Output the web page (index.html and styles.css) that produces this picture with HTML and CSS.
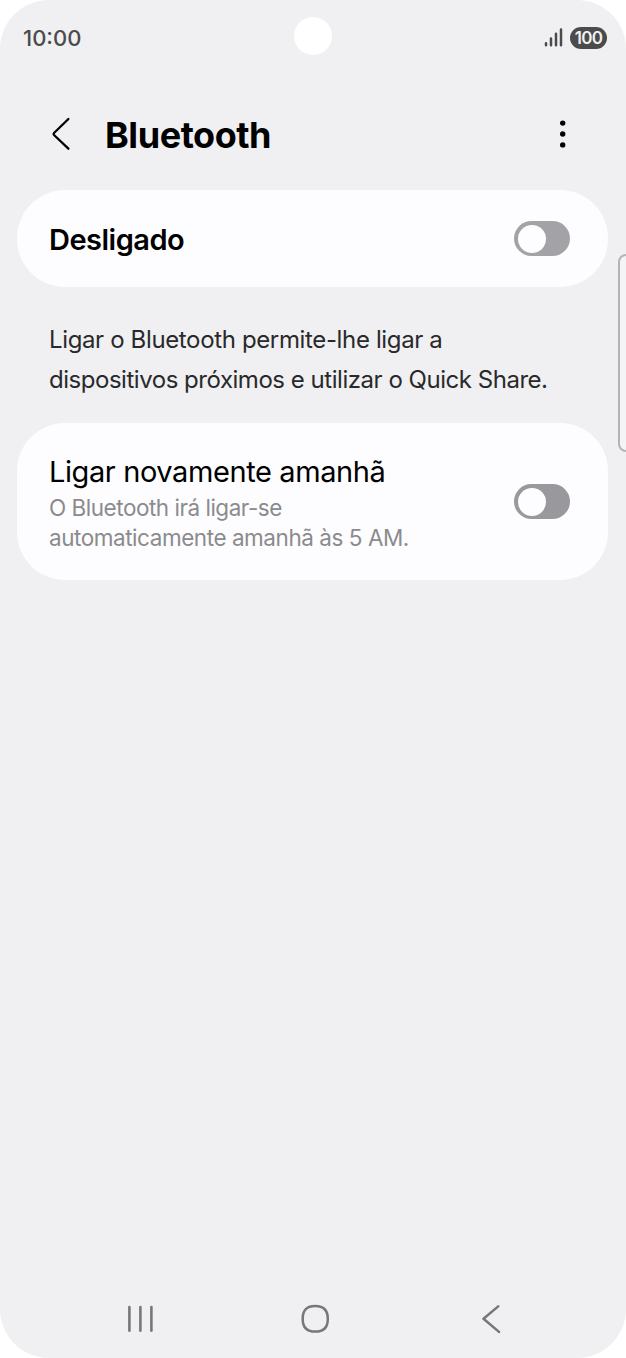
FILE: index.html
```html
<!DOCTYPE html>
<html lang="pt">
<head>
<meta charset="utf-8">
<title>Bluetooth</title>
<link rel="stylesheet" href="styles.css">
</head>
<body>
<div class="phone">
  <header class="status">
    <span class="clock">10:00</span>
    <span class="camera"></span>
    <div class="indicators">
      <svg class="signal" width="20" height="20" viewBox="0 0 20 20" fill="none" stroke="#4b4b4c" stroke-width="2.5" stroke-linecap="round"><path d="M2 15.2v2.1M7 10.5v6.8M12 5.8v11.5M17 1.5v15.8"/></svg>
      <span class="battery">100</span>
    </div>
  </header>
  <div class="appbar">
    <svg class="back" width="22" height="36" viewBox="0 0 22 36" fill="none" stroke="#000" stroke-width="2.3" stroke-linecap="round" stroke-linejoin="round"><path d="M18.4 3 4 17Q3 18 4 19L18.4 32.7"/></svg>
    <h1 class="title">Bluetooth</h1>
    <svg class="more" width="6" height="28" viewBox="0 0 6 28"><circle cx="2.7" cy="3.1" r="2.7"/><circle cx="2.7" cy="14" r="2.7"/><circle cx="2.7" cy="24.9" r="2.7"/></svg>
  </div>
  <main class="content">
    <section class="card card-main">
      <span class="state">Desligado</span>
      <span class="switch"><span class="knob"></span></span>
    </section>
    <p class="note"><span class="note-a">Ligar o Bluetooth permite-lhe ligar a</span><br><span class="note-b">dispositivos próximos e utilizar o Quick Share.</span></p>
    <section class="card card-option">
      <div class="option-text">
        <div class="option-title">Ligar novamente amanhã</div>
        <div class="option-sub"><span class="sub-a">O Bluetooth irá ligar-se</span><br><span class="sub-b">automaticamente amanhã às 5 AM.</span></div>
      </div>
      <span class="switch switch-dark"><span class="knob"></span></span>
    </section>
  </main>
  <nav class="navbar">
    <svg width="28" height="30" viewBox="0 0 28 30" fill="none" stroke="#77777a" stroke-width="2.6" stroke-linecap="round"><path d="M3.4 3v23.8M14.4 3v23.8M25.4 3v23.8"/></svg>
    <svg width="30" height="30" viewBox="0 0 30 30" fill="none" stroke="#77777a" stroke-width="2.5"><path d="M14.3 2.1C22.8 2.1 26.8 6.1 26.8 14.9S22.8 27.6 14.3 27.6 1.7 23.7 1.7 14.9 5.8 2.1 14.3 2.1Z"/></svg>
    <svg width="20" height="30" viewBox="0 0 20 30" fill="none" stroke="#77777a" stroke-width="2.5" stroke-linecap="round" stroke-linejoin="round"><path d="M16.2 2.4 1.5 14.7 17 27.9"/></svg>
  </nav>
  <div class="edge-handle"></div>
</div>
</body>
</html>
```
FILE: styles.css
```css
body { margin: 0; background: #fff; font-family: Inter, "Noto Sans", sans-serif; }
.phone { position: relative; display: flex; flex-direction: column; width: 626px; height: 1358px; overflow: hidden; border-radius: 49px; background: #f0f0f2; }
.status { display: grid; grid-template-columns: 1fr 38px 1fr; align-items: center; height: 74px; box-sizing: border-box; padding: 0 19px 2px 23px; }
.clock { font-size: 22px; font-weight: 550; letter-spacing: 0; color: #4b4b4c; padding-top: 4px; }
.camera { width: 38px; height: 38px; border-radius: 50%; background: #fff; margin-left: -2px; }
.indicators { display: flex; justify-content: flex-end; align-items: center; gap: 6px; padding-top: 3px; }
.battery { width: 37px; height: 22px; border-radius: 11px; background: #4b4b4c; color: #f0f0f2; font-size: 17px; line-height: 22px; font-weight: 600; text-align: center; letter-spacing: -0.7px; }
.appbar { display: flex; align-items: center; height: 116px; box-sizing: border-box; padding: 0 60px 0 50px; }
.back { margin-top: 4px; }
.title { flex: 1; margin: 5px 0 0 33px; font-size: 36px; line-height: 44px; font-weight: 700; letter-spacing: -0.45px; }
.more { margin-top: 4px; }
.content { flex: 1; padding: 0 17.6px 0 17.4px; }
.card { display: flex; align-items: center; justify-content: space-between; box-sizing: border-box; padding: 0 38px 0 31.6px; background: #fdfdff; }
.card-main { height: 97px; border-radius: 48px; }
.card-option { height: 157px; border-radius: 48px; }
.state { padding-top: 2px; font-size: 29px; font-weight: 600; letter-spacing: -0.5px; color: #000; }
.switch { display: flex; align-items: center; width: 56px; height: 35px; box-sizing: border-box; padding: 0 3.2px; border-radius: 18px; background: #a3a2a7; }
.switch-dark { background: #99989d; }
.knob { width: 28px; height: 28px; border-radius: 50%; background: #fdfdff; }
.note { margin: 0; height: 136px; box-sizing: border-box; padding: 33px 0 0 31.6px; font-size: 24px; line-height: 40px; color: #29292b; white-space: nowrap; }
.note-a { letter-spacing: -0.36px; }
.note-b { letter-spacing: -0.47px; }
.option-text { padding-top: 2px; }
.option-title { font-size: 29px; line-height: 38px; padding-bottom: 2px; letter-spacing: -0.4px; color: #000; white-space: nowrap; }
.option-sub { font-size: 22.5px; line-height: 30px; color: #8b8b8d; white-space: nowrap; }
.sub-a { letter-spacing: -0.48px; }
.sub-b { letter-spacing: -0.45px; }
.navbar { display: grid; grid-template-columns: 28px 30px 20px; column-gap: 149px; height: 54px; padding-left: 126px; }
.navbar svg:nth-child(2) { margin-left: -2px; }
.edge-handle { position: absolute; left: 618px; top: 254px; width: 24px; height: 198px; box-sizing: border-box; border: 2px solid #b4b4b6; border-radius: 8px; background: #f4f4f6; }
```
